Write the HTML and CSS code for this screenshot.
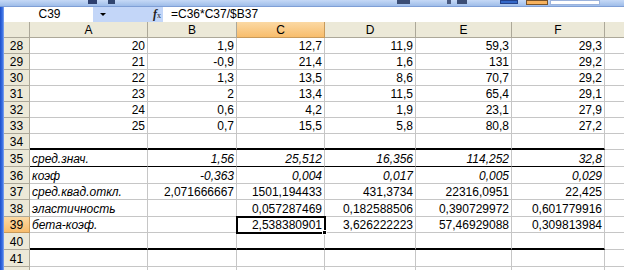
FILE: index.html
```html
<!DOCTYPE html>
<html>
<head>
<meta charset="utf-8">
<link rel="stylesheet" href="styles.css">
</head>
<body>
<div class="toolbar">
  <span class="tb tb1"></span><span class="tb tb2"></span><span class="tb tb3"></span><span class="tb tb4"></span><span class="tb tb5"></span><span class="tb tb6"></span><span class="tb tb7"></span><span class="tb tb8"></span>
</div>
<div class="frame">
  <div class="edge"></div>
  <div class="main">
    <div class="fbar">
      <div class="namebox">C39</div>
      <div class="ddarea"><span class="arrow"></span><span class="fx"><i>f</i><small>x</small></span></div>
      <div class="formula">=C36*C37/$B37</div>
    </div>
    <div class="row head">
      <div class="c h corner"></div><div class="c h">A</div><div class="c h">B</div><div class="c h sel">C</div><div class="c h">D</div><div class="c h">E</div><div class="c h">F</div><div class="c h"></div>
    </div>
    <div class="row"><div class="c h">28</div><div class="c n">20</div><div class="c n">1,9</div><div class="c n">12,7</div><div class="c n">11,9</div><div class="c n">59,3</div><div class="c n">29,3</div><div class="c g"></div></div>
    <div class="row"><div class="c h">29</div><div class="c n">21</div><div class="c n">-0,9</div><div class="c n">21,4</div><div class="c n">1,6</div><div class="c n">131</div><div class="c n">29,2</div><div class="c g"></div></div>
    <div class="row"><div class="c h">30</div><div class="c n">22</div><div class="c n">1,3</div><div class="c n">13,5</div><div class="c n">8,6</div><div class="c n">70,7</div><div class="c n">29,2</div><div class="c g"></div></div>
    <div class="row"><div class="c h">31</div><div class="c n">23</div><div class="c n">2</div><div class="c n">13,4</div><div class="c n">11,5</div><div class="c n">65,4</div><div class="c n">29,1</div><div class="c g"></div></div>
    <div class="row"><div class="c h">32</div><div class="c n">24</div><div class="c n">0,6</div><div class="c n">4,2</div><div class="c n">1,9</div><div class="c n">23,1</div><div class="c n">27,9</div><div class="c g"></div></div>
    <div class="row"><div class="c h">33</div><div class="c n">25</div><div class="c n">0,7</div><div class="c n">15,5</div><div class="c n">5,8</div><div class="c n">80,8</div><div class="c n">27,2</div><div class="c g"></div></div>
    <div class="row thickbot"><div class="c h">34</div><div class="c"></div><div class="c"></div><div class="c"></div><div class="c"></div><div class="c"></div><div class="c"></div><div class="c g"></div></div>
    <div class="row it darkbot tall"><div class="c h">35</div><div class="c t">сред.знач.</div><div class="c n">1,56</div><div class="c n">25,512</div><div class="c n">16,356</div><div class="c n">114,252</div><div class="c n">32,8</div><div class="c g"></div></div>
    <div class="row it tall"><div class="c h">36</div><div class="c t">коэф</div><div class="c n">-0,363</div><div class="c n">0,004</div><div class="c n">0,017</div><div class="c n">0,005</div><div class="c n">0,029</div><div class="c g"></div></div>
    <div class="row"><div class="c h">37</div><div class="c t it">сред.квад.откл.</div><div class="c n">2,071666667</div><div class="c n">1501,194433</div><div class="c n">431,3734</div><div class="c n">22316,0951</div><div class="c n">22,425</div><div class="c g"></div></div>
    <div class="row tall"><div class="c h">38</div><div class="c t it">эластичность</div><div class="c"></div><div class="c n">0,057287469</div><div class="c n">0,182588506</div><div class="c n">0,390729972</div><div class="c n">0,601779916</div><div class="c g"></div></div>
    <div class="row"><div class="c h sel">39</div><div class="c t it">бета-коэф.</div><div class="c"></div><div class="c n active">2,538380901<span class="handle"></span></div><div class="c n">3,626222223</div><div class="c n">57,46929088</div><div class="c n">0,309813984</div><div class="c g"></div></div>
    <div class="row thickbot tall"><div class="c h">40</div><div class="c"></div><div class="c"></div><div class="c"></div><div class="c"></div><div class="c"></div><div class="c"></div><div class="c g"></div></div>
    <div class="row tall"><div class="c h">41</div><div class="c"></div><div class="c"></div><div class="c"></div><div class="c"></div><div class="c"></div><div class="c"></div><div class="c g"></div></div>
    <div class="row"><div class="c h"></div><div class="c"></div><div class="c"></div><div class="c"></div><div class="c"></div><div class="c"></div><div class="c"></div><div class="c g"></div></div>
  </div>
</div>
</body>
</html>
```
FILE: styles.css
```css
* { box-sizing: border-box; }
html, body { margin: 0; padding: 0; }
body {
  width: 624px;
  height: 270px;
  overflow: hidden;
  background: #fff;
  font-family: "Liberation Sans", Arial, sans-serif;
  font-size: 12px;
  color: #000;
}
.toolbar {
  height: 7px;
  background: linear-gradient(#c6d9f6, #9fbde9);
  border-bottom: 1px solid #7f9fd6;
  display: flex;
  align-items: flex-start;
  overflow: hidden;
}
.tb { display: block; height: 4px; }
.tb1 { width: 9px; margin-left: 88px; background: #2d3f6e; }
.tb2 { width: 7px; margin-left: 11px; background: #31456f; }
.tb3 { width: 13px; margin-left: 282px; background: #3b4d74; }
.tb4 { width: 4px; margin-left: 37px; background: #4a5a80; }
.tb5 { width: 10px; margin-left: 6px; background: #3b4d74; }
.tb6 { width: 18px; margin-left: 33px; background: #3468c8; border: 1px solid #22418a; }
.tb7 { width: 22px; margin-left: 8px; height: 5px; background: #f7b25e; border: 1px solid #7a5328; }
.tb8 { width: 50px; margin-left: 2px; height: 5px; background: #fff; border: 1px solid #9cb3dc; }
.frame { display: flex; height: 263px; }
.edge {
  width: 4px;
  flex: none;
  background: linear-gradient(90deg, #1d4fc9, #3a70e3 60%, #88aaf0);
}
.main { flex: 1; overflow: hidden; }
.fbar { display: flex; height: 15px; background: #fff; }
.namebox { width: 89px; text-align: center; line-height: 15px; padding-left: 2px; }
.ddarea {
  width: 70px;
  background: #c3d6f8;
  display: flex;
  align-items: center;
}
.arrow {
  margin-left: 7px;
  width: 0; height: 0;
  border-left: 3px solid transparent;
  border-right: 3px solid transparent;
  border-top: 3px solid #000;
}
.fx { margin-left: 47px; font-family: "Liberation Serif", serif; font-size: 12px; line-height: 15px; color: #222; }
.fx i { font-weight: bold; }
.fx small { font-size: 8px; }
.formula { padding-left: 8px; line-height: 15px; }
.row {
  display: grid;
  grid-template-columns: 26px 118px 89px 88px 91px 96px 93px 30px;
  height: 16px;
}
.row.tall { height: 17px; }
.c {
  border-right: 1px solid #c6c6c6;
  border-bottom: 1px solid #c6c6c6;
  white-space: nowrap;
  padding: 0 2px;
  position: relative;
  display: flex;
  align-items: flex-end;
  line-height: 14px;
}
.c.h {
  background: #ece9d8;
  border-right: 1px solid #aca899;
  border-bottom: 1px solid #aca899;
  justify-content: center;
  padding: 0;
}
.c.h.sel { background: linear-gradient(#fbd9a4, #f8bd6c); border-color: #c89a5a; }
.c.n { justify-content: flex-end; }
.c.t { justify-content: flex-start; }
.it .c:not(.h), .c.it { font-style: italic; }
.thickbot .c:not(.h):not(.g) { border-bottom: 2px solid #000; }
.darkbot .c:not(.h):not(.g) { border-bottom: 1px solid #000; }
.c.active {
  outline: 2px solid #000;
  outline-offset: -1px;
  z-index: 2;
}
.handle {
  position: absolute;
  right: -3px;
  bottom: -3px;
  width: 5px;
  height: 5px;
  background: #000;
  border: 1px solid #fff;
}
```
